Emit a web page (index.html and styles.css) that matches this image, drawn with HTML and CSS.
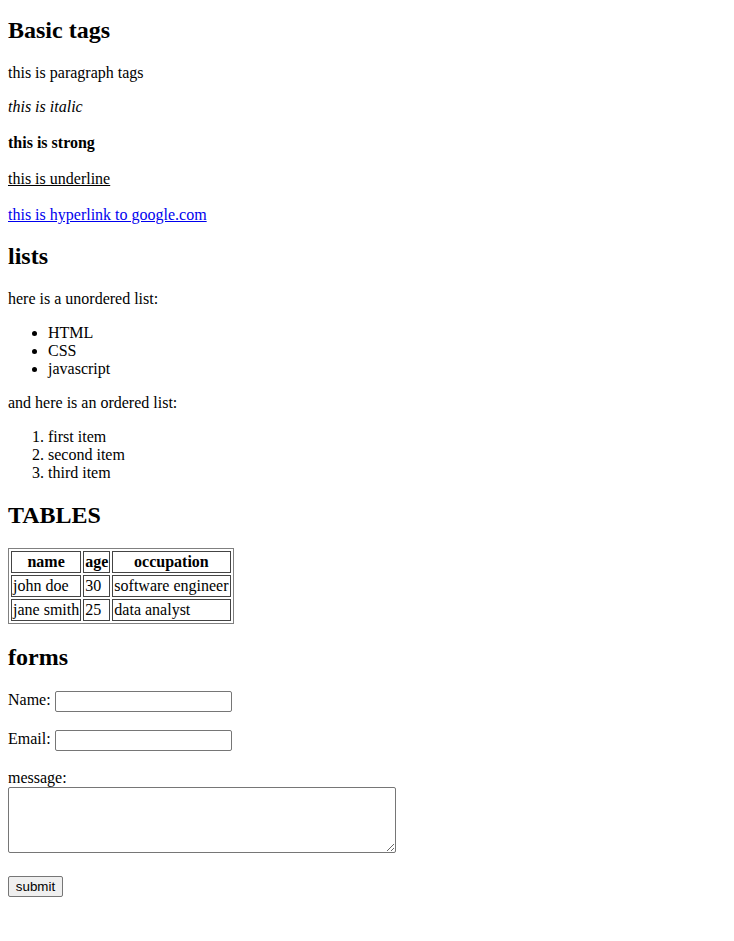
FILE: index.html
```html
<!DOCTYPE html>
<html>
<head>
<meta charset="utf-8">
<title>Basic tags</title>
<link rel="stylesheet" href="styles.css">
</head>
<body class="page">
<h2 class="heading first">Basic tags</h2>
<p class="para lead">this is paragraph tags</p>
<p class="para"><i>this is italic</i></p>
<p class="para gap"><strong>this is strong</strong></p>
<p class="para gap"><u>this is underline</u></p>
<p class="para gap"><a class="link" href="#">this is hyperlink to google.com</a></p>

<h2 class="heading lists-head">lists</h2>
<p class="para">here is a unordered list:</p>
<ul class="list">
<li>HTML</li>
<li>CSS</li>
<li>javascript</li>
</ul>
<p class="para">and here is an ordered list:</p>
<ol class="list">
<li>first item</li>
<li>second item</li>
<li>third item</li>
</ol>

<h2 class="heading">TABLES</h2>
<table class="data">
<tr><th>name</th><th>age</th><th>occupation</th></tr>
<tr><td>john doe</td><td>30</td><td>software engineer</td></tr>
<tr><td>jane smith</td><td>25</td><td>data analyst</td></tr>
</table>

<h2 class="heading">forms</h2>
<form class="form">
<div class="row"><label>Name:</label><input class="field" type="text"></div>
<div class="row"><label>Email:</label><input class="field" type="email"></div>
<div class="block msg"><label>message:</label><textarea class="area" rows="4"></textarea></div>
<div class="block"><button class="btn" type="button">submit</button></div>
</form>
</body>
</html>
```

FILE: styles.css
```css
html { background: #fff; margin: 0; padding: 0; }
.page {
  margin: 0;
  padding: 0 8px 8px;
  font-family: "Liberation Serif", "Times New Roman", serif;
  font-size: 16px;
  line-height: 18px;
  color: #000;
}
.heading {
  font-size: 24px;
  line-height: 26px;
  font-weight: bold;
  margin: 20px 0;
}
.heading.first { margin-top: 17px; }
.heading.lists-head { margin-top: 19px; margin-bottom: 21px; }
.para { margin: 16px 0; }
.para.lead { padding-top: 1px; }
.para.gap { margin-top: 18px; }
.list { margin: 16px 0; padding-left: 40px; }
.link { color: #0000ee; }
.data {
  border: 1px solid #808080;
  border-spacing: 2px;
  line-height: 18px;
}
.data th, .data td {
  border: 1px solid #444;
  padding: 1px;
}
.form { margin: 0; }
.row {
  display: flex;
  align-items: flex-start;
  gap: 4px;
  height: 23px;
  box-sizing: border-box;
  padding-top: 1px;
  margin: 16px 0;
}
.block { margin: 16px 0; }
.block.msg { margin-top: 17px; padding-bottom: 7px; }
.block label { display: block; }
.field {
  width: 177px;
  height: 21px;
  box-sizing: border-box;
  margin: 0;
  border: 1px solid #767676;
  border-radius: 2px;
  padding: 1px 2px;
  font-family: "Liberation Sans", Arial, sans-serif;
  font-size: 13.33px;
}
.area {
  display: block;
  width: 388px;
  height: 66px;
  box-sizing: border-box;
  margin: 0;
  border: 1px solid #767676;
  border-radius: 2px;
  padding: 2px;
  font-family: "Liberation Mono", monospace;
  font-size: 13.33px;
  resize: both;
}
.btn {
  display: block;
  font-family: "Liberation Sans", Arial, sans-serif;
  font-size: 13.33px;
  line-height: 15px;
  height: 21px;
  width: 55px;
  padding: 1px 6px;
  border: 1px solid #767676;
  border-radius: 2px;
  background: #efefef;
  color: #000;
}
```
